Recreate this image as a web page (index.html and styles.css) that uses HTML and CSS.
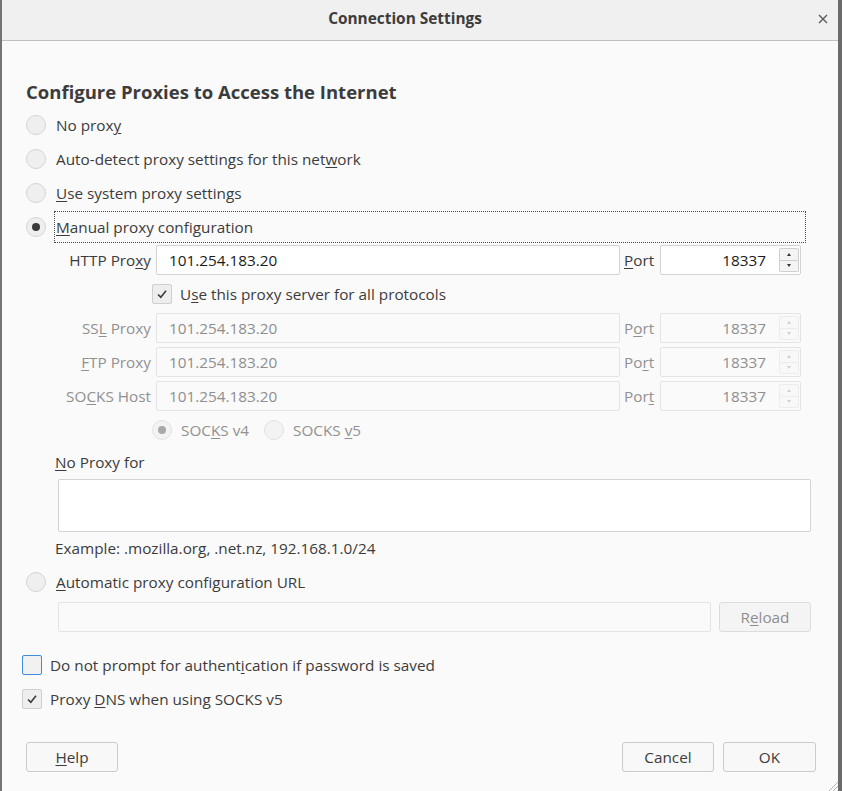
FILE: index.html
```html
<!DOCTYPE html>
<html>
<head>
<meta charset="utf-8">
<title>Connection Settings</title>
<link rel="stylesheet" href="styles.css">
</head>
<body>
<div class="window">
  <header class="titlebar">
    <span class="title">Connection Settings</span>
    <span class="close">
      <svg width="10" height="10" viewBox="0 0 10 10"><path d="M1 1 L9 9 M9 1 L1 9" stroke="#555a5e" stroke-width="1.4" fill="none"/></svg>
    </span>
  </header>
  <main class="content">
    <h1 class="heading">Configure Proxies to Access the Internet</h1>

    <div class="radio-row"><span class="radio"></span><span class="label">No prox<u>y</u></span></div>
    <div class="radio-row"><span class="radio"></span><span class="label">Auto-detect proxy settings for this net<u>w</u>ork</span></div>
    <div class="radio-row"><span class="radio"></span><span class="label"><u>U</u>se system proxy settings</span></div>
    <div class="radio-row"><span class="radio checked"></span><span class="label focus"><u>M</u>anual proxy configuration</span></div>

    <div class="proxy-grid">
      <span class="plabel">HTTP Pro<u>x</u>y</span>
      <span class="field">101.254.183.20</span>
      <span class="portlabel"><u>P</u>ort</span>
      <span class="field port"><span>18337</span><span class="spin"><span class="up"></span><span class="down"></span></span></span>

      <div class="check-line"><span class="checkbox checked"><svg width="12" height="12" viewBox="0 0 12 12"><path d="M2 6.5 L4.8 9.2 L10 2.8" stroke="#3c3c3c" stroke-width="1.6" fill="none"/></svg></span><span>U<u>s</u>e this proxy server for all protocols</span></div>

      <span class="plabel dis">SS<u>L</u> Proxy</span>
      <span class="field disabled">101.254.183.20</span>
      <span class="portlabel dis">P<u>o</u>rt</span>
      <span class="field port disabled"><span>18337</span><span class="spin"><span class="up"></span><span class="down"></span></span></span>

      <span class="plabel dis"><u>F</u>TP Proxy</span>
      <span class="field disabled">101.254.183.20</span>
      <span class="portlabel dis">Po<u>r</u>t</span>
      <span class="field port disabled"><span>18337</span><span class="spin"><span class="up"></span><span class="down"></span></span></span>

      <span class="plabel dis">SO<u>C</u>KS Host</span>
      <span class="field disabled">101.254.183.20</span>
      <span class="portlabel dis">Por<u>t</u></span>
      <span class="field port disabled"><span>18337</span><span class="spin"><span class="up"></span><span class="down"></span></span></span>

      <div class="socks-line dis">
        <span class="radio checked disabled"></span><span class="socks-label">SOC<u>K</u>S v4</span>
        <span class="radio disabled"></span><span class="socks-label">SOCKS <u>v</u>5</span>
      </div>
    </div>

    <div class="noproxy-label"><u>N</u>o Proxy for</div>
    <div class="textarea"></div>
    <div class="example">Example: .mozilla.org, .net.nz, 192.168.1.0/24</div>

    <div class="radio-row"><span class="radio"></span><span class="label"><u>A</u>utomatic proxy configuration URL</span></div>
    <div class="url-row">
      <span class="field url"></span>
      <span class="button disabled">R<u>e</u>load</span>
    </div>

    <div class="option-row"><span class="checkbox focused"></span><span>Do not prompt for authent<u>i</u>cation if password is saved</span></div>
    <div class="option-row"><span class="checkbox checked"><svg width="12" height="12" viewBox="0 0 12 12"><path d="M2 6.5 L4.8 9.2 L10 2.8" stroke="#3c3c3c" stroke-width="1.6" fill="none"/></svg></span><span>Proxy <u>D</u>NS when using SOCKS v5</span></div>

    <div class="button-row">
      <span class="button help"><u>H</u>elp</span>
      <span class="spacer"></span>
      <span class="button cancel">Cancel</span>
      <span class="button ok">OK</span>
    </div>
  </main>
  <svg class="grip" width="10" height="10" viewBox="0 0 10 10"><path d="M10 1 L1 10 M10 5 L5 10" stroke="#b0b0b0" stroke-width="1" fill="none"/></svg>
</div>
</body>
</html>
```

FILE: styles.css
```css
html, body {
  margin: 0;
  padding: 0;
  background: #fafafa;
}

.window {
  position: relative;
  width: 842px;
  height: 791px;
  box-sizing: border-box;
  border-left: 2px solid #747474;
  border-right: 4px solid #6b6b6b;
  background: #fafafa;
  display: flex;
  flex-direction: column;
  font-family: "Open Sans", "DejaVu Sans", sans-serif;
  font-size: 15.3px;
  color: #3c3c3c;
}

u {
  text-decoration: underline;
  text-underline-offset: 2px;
  text-decoration-thickness: 1px;
}

.titlebar {
  height: 40px;
  flex: none;
  border-bottom: 1px solid #bfbfbf;
  background: #f0f0f0;
  display: flex;
  align-items: center;
}

.title {
  flex: 1;
  text-align: center;
  font-weight: bold;
  font-size: 15.4px;
  color: #3c3c3c;
  margin-bottom: 3px;
}

.close {
  width: 30px;
  display: flex;
  justify-content: center;
  margin-bottom: 3px;
}

.content {
  flex: 1;
  display: flex;
  flex-direction: column;
  padding: 39px 22px 19px 20px;
}

.heading {
  margin: 0 0 4px 4px;
  font-size: 18.5px;
  font-weight: bold;
  line-height: 24px;
  color: #3c3c3c;
}

.radio-row {
  display: flex;
  align-items: center;
  height: 34px;
  margin-left: 4px;
  gap: 8px;
}

.radio {
  width: 20px;
  height: 20px;
  box-sizing: border-box;
  border-radius: 50%;
  border: 1px solid #d4d4d4;
  background: #efefef;
  display: flex;
  align-items: center;
  justify-content: center;
  flex: none;
}

.radio.checked::after {
  content: "";
  width: 8px;
  height: 8px;
  border-radius: 50%;
  background: #3a3a3a;
}

.radio.disabled {
  background: #f3f3f3;
  border-color: #e2e2e2;
}

.radio.checked.disabled::after {
  background: #a8a8a8;
}

.label {
  border: 1px dotted transparent;
  padding: 0 1px;
  line-height: 30px;
}

.label.focus {
  flex: 1;
  border-color: #4a4a4a;
  margin-right: 10px;
}

.proxy-grid {
  margin: 1px 0 0 33px;
  display: grid;
  grid-template-columns: 96px 464px 30px 141px;
  grid-auto-rows: 30px;
  column-gap: 5px;
  row-gap: 4px;
  align-items: center;
}

.plabel {
  text-align: right;
  white-space: nowrap;
}

.portlabel {
  white-space: nowrap;
  margin-left: -1px;
}

.dis {
  color: #919191;
}

.field {
  height: 30px;
  box-sizing: border-box;
  border: 1px solid #d3d3d3;
  border-radius: 2px;
  background: #ffffff;
  padding: 0 12px;
  display: flex;
  align-items: center;
  color: #1b1b1b;
}

.field.disabled {
  background: #fafafa;
  border-color: #e4e4e4;
  color: #8e8e8e;
}

.field.port {
  justify-content: flex-end;
  padding-right: 1px;
  gap: 13px;
}

.spin {
  width: 20px;
  height: 24px;
  display: flex;
  flex-direction: column;
}

.spin span {
  flex: 1;
  box-sizing: border-box;
  border: 1px solid #cfcfcf;
  background: #f4f4f4;
  display: flex;
  align-items: center;
  justify-content: center;
}

.spin .up {
  border-radius: 2px 2px 0 0;
}

.spin .down {
  border-top: none;
  border-radius: 0 0 2px 2px;
}

.spin .up::after {
  content: "";
  border-left: 2.5px solid transparent;
  border-right: 2.5px solid transparent;
  border-bottom: 3px solid #333;
}

.spin .down::after {
  content: "";
  border-left: 2.5px solid transparent;
  border-right: 2.5px solid transparent;
  border-top: 3px solid #333;
}

.disabled .spin span {
  border-color: #ececec;
  background: #f8f8f8;
}

.disabled .spin span::after {
  border-bottom-color: #d0d0d0;
  border-top-color: #d0d0d0;
}

.check-line,
.socks-line {
  grid-column: 2 / -1;
  margin-left: -4px;
  display: flex;
  align-items: center;
  gap: 8px;
  white-space: nowrap;
}

.socks-line {
  gap: 9px;
}

.socks-label {
  margin-right: 6px;
}

.checkbox {
  width: 20px;
  height: 20px;
  box-sizing: border-box;
  border: 1px solid #d0d0d0;
  border-radius: 2px;
  background: #eeeeee;
  display: flex;
  align-items: center;
  justify-content: center;
  flex: none;
}

.checkbox.focused {
  border-color: #3d8ee3;
  background: #f1f1f1;
}

.noproxy-label {
  margin: 2px 0 0 33px;
  height: 30px;
  line-height: 30px;
}

.textarea {
  margin: 2px 5px 0 36px;
  height: 53px;
  box-sizing: border-box;
  border: 1px solid #d3d3d3;
  border-radius: 2px;
  background: #ffffff;
}

.example {
  margin-left: 33px;
  height: 33px;
  line-height: 33px;
}

.url-row {
  margin: 3px 5px 0 36px;
  display: flex;
  gap: 8px;
}

.field.url {
  flex: 1;
  background: #fafafa;
  border-color: #e4e4e4;
}

.button {
  height: 30px;
  box-sizing: border-box;
  border: 1px solid #cbcbcb;
  border-radius: 3px;
  background: #f8f8f8;
  display: flex;
  align-items: center;
  justify-content: center;
  color: #3c3c3c;
}

.button.disabled {
  width: 92px;
  background: #f4f4f4;
  border-color: #dcdcdc;
  color: #8e8e8e;
}

.option-row {
  display: flex;
  align-items: center;
  height: 34px;
  gap: 8px;
}

.url-row + .option-row {
  margin-top: 16px;
}

.button-row {
  margin-top: auto;
  display: flex;
  gap: 9px;
}

.spacer {
  flex: 1;
}

.button.help {
  width: 92px;
  margin-left: 4px;
}

.button.cancel {
  width: 92px;
}

.button.ok {
  width: 93px;
}

.grip {
  position: absolute;
  right: 0;
  bottom: 0;
}
```
